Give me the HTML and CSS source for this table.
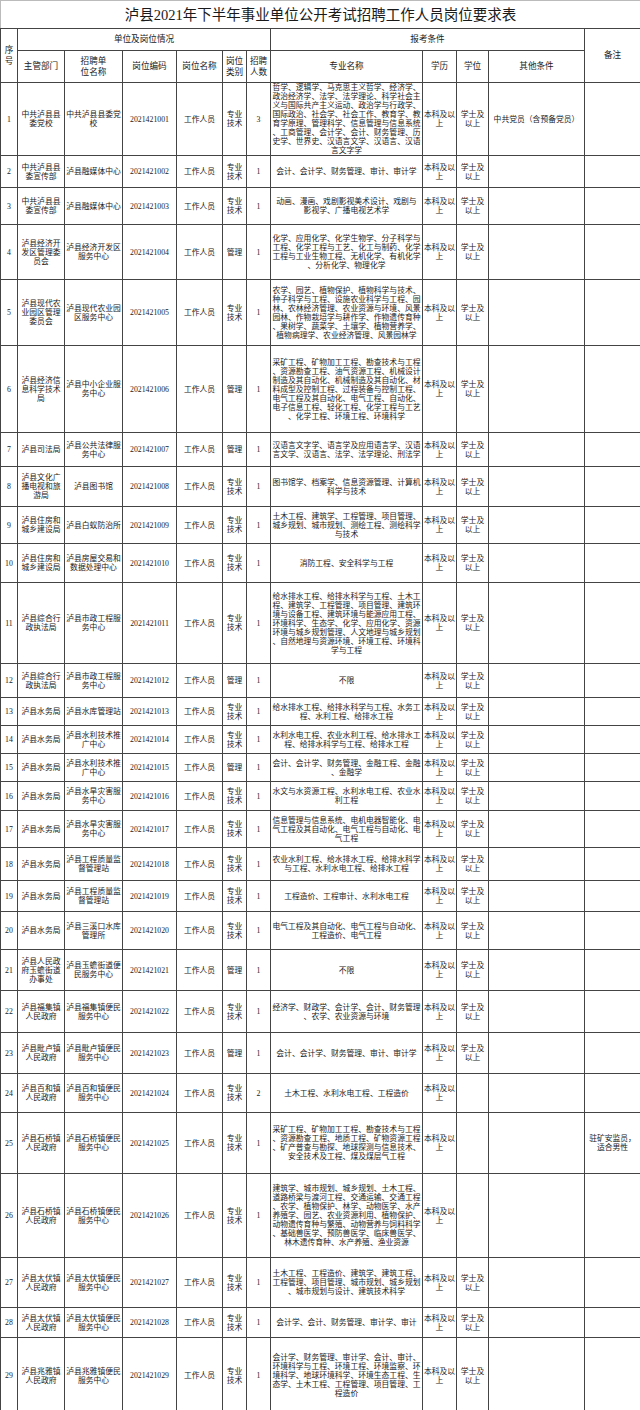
FILE: index.html
```html
<!DOCTYPE html>
<html lang="zh-CN">
<head>
<meta charset="utf-8">
<title>泸县2021年下半年事业单位公开考试招聘工作人员岗位要求表</title>
<link rel="stylesheet" href="styles.css">
</head>
<body>
<table class="sheet">
  <colgroup>
    <col class="c-no"><col class="c-dept"><col class="c-unit"><col class="c-code"><col class="c-post"><col class="c-type"><col class="c-num"><col class="c-major"><col class="c-edu"><col class="c-deg"><col class="c-other"><col class="c-note">
  </colgroup>
  <tr class="title"><td colspan="12">泸县2021年下半年事业单位公开考试招聘工作人员岗位要求表</td></tr>
  <tr class="head-1"><th rowspan="2">序<br>号</th><th colspan="6">单位及岗位情况</th><th colspan="4">报考条件</th><th rowspan="2">备注</th></tr>
  <tr class="head-2"><th>主管部门</th><th>招聘单<br>位名称</th><th>岗位编码</th><th>岗位名称</th><th>岗位<br>类别</th><th>招聘<br>人数</th><th>专业名称</th><th>学历</th><th>学位</th><th>其他条件</th></tr>

  <tr class="r1"><td>1</td><td>中共泸县县<br>委党校</td><td>中共泸县县委党<br>校</td><td>2021421001</td><td>工作人员</td><td>专业<br>技术</td><td>3</td><td>哲学、逻辑学、马克思主义哲学、经济学、<br>政治经济学、法学、法学理论、科学社会主<br>义与国际共产主义运动、政治学与行政学、<br>国际政治、社会学、社会工作、教育学、教<br>育学原理、管理科学、信息管理与信息系统<br>、工商管理、会计学、会计、财务管理、历<br>史学、世界史、汉语言文学、汉语言、汉语<br>言文字学</td><td>本科及以<br>上</td><td>学士及<br>以上</td><td>中共党员（含预备党员）</td><td></td></tr>

  <tr class="r2"><td>2</td><td>中共泸县县<br>委宣传部</td><td>泸县融媒体中心</td><td>2021421002</td><td>工作人员</td><td>专业<br>技术</td><td>1</td><td>会计、会计学、财务管理、审计、审计学</td><td>本科及以<br>上</td><td>学士及<br>以上</td><td></td><td></td></tr>

  <tr class="r3"><td>3</td><td>中共泸县县<br>委宣传部</td><td>泸县融媒体中心</td><td>2021421003</td><td>工作人员</td><td>专业<br>技术</td><td>1</td><td>动画、漫画、戏剧影视美术设计、戏剧与<br>影视学、广播电视艺术学</td><td>本科及以<br>上</td><td>学士及<br>以上</td><td></td><td></td></tr>

  <tr class="r4"><td>4</td><td>泸县经济开<br>发区管理委<br>员会</td><td>泸县经济开发区<br>服务中心</td><td>2021421004</td><td>工作人员</td><td>管理</td><td>1</td><td>化学、应用化学、化学生物学、分子科学与<br>工程、化学工程与工艺、化工与制药、化学<br>工程与工业生物工程、无机化学、有机化学<br>、分析化学、物理化学</td><td>本科及以<br>上</td><td>学士及<br>以上</td><td></td><td></td></tr>

  <tr class="r5"><td>5</td><td>泸县现代农<br>业园区管理<br>委员会</td><td>泸县现代农业园<br>区服务中心</td><td>2021421005</td><td>工作人员</td><td>专业<br>技术</td><td>1</td><td>农学、园艺、植物保护、植物科学与技术、<br>种子科学与工程、设施农业科学与工程、园<br>林、农林经济管理、农业资源与环境、风景<br>园林、作物栽培学与耕作学、作物遗传育种<br>、果树学、蔬菜学、土壤学、植物营养学、<br>植物病理学、农业经济管理、风景园林学</td><td>本科及以<br>上</td><td>学士及<br>以上</td><td></td><td></td></tr>

  <tr class="r6"><td>6</td><td>泸县经济信<br>息科学技术<br>局</td><td>泸县中小企业服<br>务中心</td><td>2021421006</td><td>工作人员</td><td>管理</td><td>1</td><td>采矿工程、矿物加工工程、勘查技术与工程<br>、资源勘查工程、油气资源工程、机械设计<br>制造及其自动化、机械制造及其自动化、材<br>料成型及控制工程、过程装备与控制工程、<br>电气工程及其自动化、电气工程、自动化、<br>电子信息工程、轻化工程、化学工程与工艺<br>、化学工程、环境工程、环境科学</td><td>本科及以<br>上</td><td>学士及<br>以上</td><td></td><td></td></tr>

  <tr class="r7"><td>7</td><td>泸县司法局</td><td>泸县公共法律服<br>务中心</td><td>2021421007</td><td>工作人员</td><td>管理</td><td>1</td><td>汉语言文字学、语言学及应用语言学、汉语<br>言文学、汉语言、法学、法学理论、刑法学</td><td>本科及以<br>上</td><td>学士及<br>以上</td><td></td><td></td></tr>

  <tr class="r8"><td>8</td><td>泸县文化广<br>播电视和旅<br>游局</td><td>泸县图书馆</td><td>2021421008</td><td>工作人员</td><td>专业<br>技术</td><td>1</td><td>图书馆学、档案学、信息资源管理、计算机<br>科学与技术</td><td>本科及以<br>上</td><td>学士及<br>以上</td><td></td><td></td></tr>

  <tr class="r9"><td>9</td><td>泸县住房和<br>城乡建设局</td><td>泸县白蚁防治所</td><td>2021421009</td><td>工作人员</td><td>专业<br>技术</td><td>1</td><td>土木工程、建筑学、工程管理、项目管理、<br>城乡规划、城市规划、测绘工程、测绘科学<br>与技术</td><td>本科及以<br>上</td><td>学士及<br>以上</td><td></td><td></td></tr>

  <tr class="r10"><td>10</td><td>泸县住房和<br>城乡建设局</td><td>泸县房屋交易和<br>数据处理中心</td><td>2021421010</td><td>工作人员</td><td>专业<br>技术</td><td>1</td><td>消防工程、安全科学与工程</td><td>本科及以<br>上</td><td>学士及<br>以上</td><td></td><td></td></tr>

  <tr class="r11"><td>11</td><td>泸县综合行<br>政执法局</td><td>泸县市政工程服<br>务中心</td><td>2021421011</td><td>工作人员</td><td>专业<br>技术</td><td>1</td><td>给水排水工程、给排水科学与工程、土木工<br>程、建筑学、工程管理、项目管理、建筑环<br>境与设备工程、建筑环境与能源应用工程、<br>环境科学、生态学、化学、应用化学、资源<br>环境与城乡规划管理、人文地理与城乡规划<br>、自然地理与资源环境、环境工程、环境科<br>学与工程</td><td>本科及以<br>上</td><td>学士及<br>以上</td><td></td><td></td></tr>

  <tr class="r12"><td>12</td><td>泸县综合行<br>政执法局</td><td>泸县市政工程服<br>务中心</td><td>2021421012</td><td>工作人员</td><td>管理</td><td>1</td><td>不限</td><td>本科及以<br>上</td><td>学士及<br>以上</td><td></td><td></td></tr>

  <tr class="r13"><td>13</td><td>泸县水务局</td><td>泸县水库管理站</td><td>2021421013</td><td>工作人员</td><td>专业<br>技术</td><td>1</td><td>给水排水工程、给排水科学与工程、水务工<br>程、水利工程、给排水工程</td><td>本科及以<br>上</td><td>学士及<br>以上</td><td></td><td></td></tr>

  <tr class="r14"><td>14</td><td>泸县水务局</td><td>泸县水利技术推<br>广中心</td><td>2021421014</td><td>工作人员</td><td>专业<br>技术</td><td>1</td><td>水利水电工程、农业水利工程、给水排水工<br>程、给排水科学与工程、给排水工程</td><td>本科及以<br>上</td><td>学士及<br>以上</td><td></td><td></td></tr>

  <tr class="r15"><td>15</td><td>泸县水务局</td><td>泸县水利技术推<br>广中心</td><td>2021421015</td><td>工作人员</td><td>管理</td><td>1</td><td>会计、会计学、财务管理、金融工程、金融<br>、金融学</td><td>本科及以<br>上</td><td>学士及<br>以上</td><td></td><td></td></tr>

  <tr class="r16"><td>16</td><td>泸县水务局</td><td>泸县水旱灾害服<br>务中心</td><td>2021421016</td><td>工作人员</td><td>专业<br>技术</td><td>1</td><td>水文与水资源工程、水利水电工程、农业水<br>利工程</td><td>本科及以<br>上</td><td>学士及<br>以上</td><td></td><td></td></tr>

  <tr class="r17"><td>17</td><td>泸县水务局</td><td>泸县水旱灾害服<br>务中心</td><td>2021421017</td><td>工作人员</td><td>专业<br>技术</td><td>1</td><td>信息管理与信息系统、电机电器智能化、电<br>气工程及其自动化、电气工程与自动化、电<br>气工程</td><td>本科及以<br>上</td><td>学士及<br>以上</td><td></td><td></td></tr>

  <tr class="r18"><td>18</td><td>泸县水务局</td><td>泸县工程质量监<br>督管理站</td><td>2021421018</td><td>工作人员</td><td>专业<br>技术</td><td>1</td><td>农业水利工程、给水排水工程、给排水科学<br>与工程、水利水电工程、给排水工程</td><td>本科及以<br>上</td><td>学士及<br>以上</td><td></td><td></td></tr>

  <tr class="r19"><td>19</td><td>泸县水务局</td><td>泸县工程质量监<br>督管理站</td><td>2021421019</td><td>工作人员</td><td>专业<br>技术</td><td>1</td><td>工程造价、工程审计、水利水电工程</td><td>本科及以<br>上</td><td>学士及<br>以上</td><td></td><td></td></tr>

  <tr class="r20"><td>20</td><td>泸县水务局</td><td>泸县三溪口水库<br>管理所</td><td>2021421020</td><td>工作人员</td><td>专业<br>技术</td><td>1</td><td>电气工程及其自动化、电气工程与自动化、<br>工程造价、电气工程</td><td>本科及以<br>上</td><td>学士及<br>以上</td><td></td><td></td></tr>

  <tr class="r21"><td>21</td><td>泸县人民政<br>府玉蟾街道<br>办事处</td><td>泸县玉蟾街道便<br>民服务中心</td><td>2021421021</td><td>工作人员</td><td>管理</td><td>1</td><td>不限</td><td>本科及以<br>上</td><td>学士及<br>以上</td><td></td><td></td></tr>

  <tr class="r22"><td>22</td><td>泸县福集镇<br>人民政府</td><td>泸县福集镇便民<br>服务中心</td><td>2021421022</td><td>工作人员</td><td>专业<br>技术</td><td>1</td><td>经济学、财政学、会计学、会计、财务管理<br>、农学、农业资源与环境</td><td>本科及以<br>上</td><td>学士及<br>以上</td><td></td><td></td></tr>

  <tr class="r23"><td>23</td><td>泸县毗卢镇<br>人民政府</td><td>泸县毗卢镇便民<br>服务中心</td><td>2021421023</td><td>工作人员</td><td>管理</td><td>1</td><td>会计、会计学、财务管理、审计、审计学</td><td>本科及以<br>上</td><td>学士及<br>以上</td><td></td><td></td></tr>

  <tr class="r24"><td>24</td><td>泸县百和镇<br>人民政府</td><td>泸县百和镇便民<br>服务中心</td><td>2021421024</td><td>工作人员</td><td>专业<br>技术</td><td>2</td><td>土木工程、水利水电工程、工程造价</td><td>本科及以<br>上</td><td></td><td></td><td></td></tr>

  <tr class="r25"><td>25</td><td>泸县石桥镇<br>人民政府</td><td>泸县石桥镇便民<br>服务中心</td><td>2021421025</td><td>工作人员</td><td>专业<br>技术</td><td>1</td><td>采矿工程、矿物加工工程、勘查技术与工程<br>、资源勘查工程、地质工程、矿物资源工程<br>、矿产普查与勘探、地球探测与信息技术、<br>安全技术及工程、煤及煤层气工程</td><td>本科及以<br>上</td><td></td><td></td><td>驻矿安监员，<br>适合男性</td></tr>

  <tr class="r26"><td>26</td><td>泸县石桥镇<br>人民政府</td><td>泸县石桥镇便民<br>服务中心</td><td>2021421026</td><td>工作人员</td><td>专业<br>技术</td><td>1</td><td>建筑学、城市规划、城乡规划、土木工程、<br>道路桥梁与渡河工程、交通运输、交通工程<br>、农学、植物保护、林学、动物医学、水产<br>养殖学、园艺、农业资源利用、植物保护、<br>动物遗传育种与繁殖、动物营养与饲料科学<br>、基础兽医学、预防兽医学、临床兽医学、<br>林木遗传育种、水产养殖、渔业资源</td><td>本科及以<br>上</td><td></td><td></td><td></td></tr>

  <tr class="r27"><td>27</td><td>泸县太伏镇<br>人民政府</td><td>泸县太伏镇便民<br>服务中心</td><td>2021421027</td><td>工作人员</td><td>专业<br>技术</td><td>1</td><td>土木工程、工程造价、建筑学、建筑工程、<br>工程管理、项目管理、城市规划、城乡规划<br>、城市规划与设计、建筑技术科学</td><td>本科及以<br>上</td><td>学士及<br>以上</td><td></td><td></td></tr>

  <tr class="r28"><td>28</td><td>泸县太伏镇<br>人民政府</td><td>泸县太伏镇便民<br>服务中心</td><td>2021421028</td><td>工作人员</td><td>专业<br>技术</td><td>1</td><td>会计学、会计、财务管理、审计学、审计</td><td>本科及以<br>上</td><td>学士及<br>以上</td><td></td><td></td></tr>

  <tr class="r29"><td>29</td><td>泸县兆雅镇<br>人民政府</td><td>泸县兆雅镇便民<br>服务中心</td><td>2021421029</td><td>工作人员</td><td>专业<br>技术</td><td>1</td><td>会计学、财务管理、审计学、会计、审计、<br>环境科学与工程、环境工程、环境监察、环<br>境科学、地球环境科学、环境生态工程、生<br>态学、土木工程、工程管理、项目管理、工<br>程造价</td><td>本科及以<br>上</td><td>学士及<br>以上</td><td></td><td></td></tr>
</table>
</body>
</html>
```

FILE: styles.css
```css
html, body {
  margin: 0;
  padding: 0;
  background: #ffffff;
}

body {
  font-family: "Liberation Serif", "Noto Sans CJK SC", serif;
  color: #222222;
}

.sheet {
  width: 640px;
  border-collapse: collapse;
  table-layout: fixed;
  font-size: 7.8px;
  line-height: 9px;
}

.sheet td,
.sheet th {
  border: 1px solid #444444;
  padding: 0;
  text-align: center;
  vertical-align: middle;
  white-space: nowrap;
  overflow: hidden;
  font-weight: normal;
}

.c-no { width: 17px; }
.c-dept { width: 47px; }
.c-unit { width: 58px; }
.c-code { width: 54px; }
.c-post { width: 46px; }
.c-type { width: 24px; }
.c-num { width: 24px; }
.c-major { width: 152px; }
.c-edu { width: 34px; }
.c-deg { width: 32px; }
.c-other { width: 96px; }
.c-note { width: 56px; }

.title td {
  height: 27px;
  font-size: 14.5px;
  line-height: 18px;
  border-top-color: #bbbbbb;
  border-left-color: #bbbbbb;
  border-right-color: #bbbbbb;
  color: #1a1a1a;
}

.head-1 th,
.head-2 th {
  font-size: 8.6px;
  line-height: 11px;
}

.head-1 { height: 22px; }
.head-2 { height: 32px; }

.r1 { height: 73px; }
.r2 { height: 32px; }
.r3 { height: 37px; }
.r4 { height: 55px; }
.r5 { height: 66px; }
.r6 { height: 87px; }
.r7 { height: 34px; }
.r8 { height: 40px; }
.r9 { height: 37px; }
.r10 { height: 39px; }
.r11 { height: 81px; }
.r12 { height: 34px; }
.r13 { height: 28px; }
.r14 { height: 28px; }
.r15 { height: 28px; }
.r16 { height: 29px; }
.r17 { height: 37px; }
.r18 { height: 33px; }
.r19 { height: 31px; }
.r20 { height: 38px; }
.r21 { height: 41px; }
.r22 { height: 42px; }
.r23 { height: 41px; }
.r24 { height: 39px; }
.r25 { height: 61px; }
.r26 { height: 84px; }
.r27 { height: 50px; }
.r28 { height: 30px; }
.r29 { height: 76px; }
```
